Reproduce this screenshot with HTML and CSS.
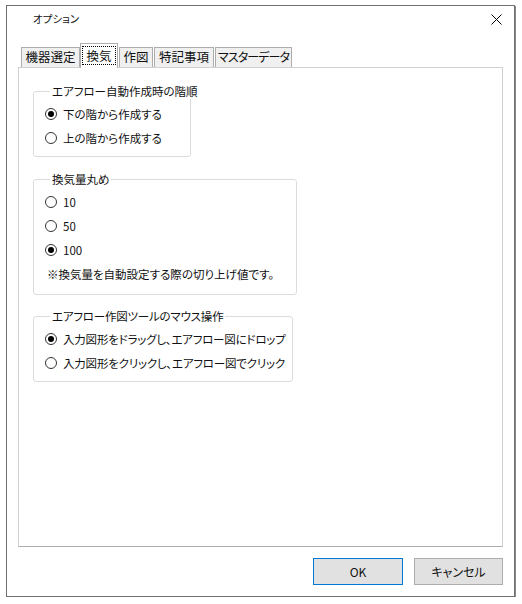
FILE: index.html
```html
<!DOCTYPE html>
<html lang="ja">
<head>
<meta charset="utf-8">
<title>オプション</title>
<link rel="stylesheet" href="styles.css">
</head>
<body>
<div class="window">
  <div class="titlebar">
    <span class="title">オプション</span>
    <svg class="close" width="11" height="11" viewBox="0 0 11 11"><path d="M0.5 0.5L10.5 10.5M10.5 0.5L0.5 10.5" stroke="#000" stroke-width="1" fill="none"/></svg>
  </div>
  <div class="content">
    <div class="tabs">
      <div class="tab t1">機器選定</div>
      <div class="tab t2 selected"><span class="focus">換気</span></div>
      <div class="tab t3">作図</div>
      <div class="tab t4">特記事項</div>
      <div class="tab t5">マスターデータ</div>
    </div>
    <div class="panel">
      <fieldset class="group g1">
        <legend>エアフロー自動作成時の階順</legend>
        <div class="row"><span class="radio checked"></span>下の階から作成する</div>
        <div class="row"><span class="radio"></span>上の階から作成する</div>
      </fieldset>
      <fieldset class="group g2">
        <legend>換気量丸め</legend>
        <div class="row"><span class="radio"></span>10</div>
        <div class="row"><span class="radio"></span>50</div>
        <div class="row"><span class="radio checked"></span>100</div>
        <div class="row note">※換気量を自動設定する際の切り上げ値です。</div>
      </fieldset>
      <fieldset class="group g3">
        <legend>エアフロー作図ツールのマウス操作</legend>
        <div class="row"><span class="radio checked"></span>入力図形をドラッグし、エアフロー図にドロップ</div>
        <div class="row"><span class="radio"></span>入力図形をクリックし、エアフロー図でクリック</div>
      </fieldset>
    </div>
    <div class="buttons">
      <div class="btn ok">OK</div>
      <div class="btn cancel">キャンセル</div>
    </div>
  </div>
</div>
</body>
</html>
```
FILE: styles.css
```css
* { box-sizing: border-box; }
html, body { margin: 0; padding: 0; background: #fff; }
body {
  font-family: "Noto Sans CJK JP", "Noto Sans", sans-serif;
  font-size: 11.5px;
  color: #111;
  font-feature-settings: "palt";
}
.window {
  margin: 5px 0 0 6px;
  width: 509px;
  height: 592px;
  border: 1px solid #6f6f6f;
  box-shadow: 1px 1px 0 #8a8a8a;
  display: flex;
  flex-direction: column;
  background: #fff;
}
.titlebar {
  height: 26px;
  display: flex;
  align-items: center;
  justify-content: space-between;
  padding: 0 12px 0 26px;
}
.title { font-size: 10.5px; line-height: 14px; }
.close { display: block; }
.content {
  padding: 11px 11px 0 11px;
  display: flex;
  flex-direction: column;
}
.tabs {
  display: flex;
  align-items: flex-end;
  height: 24px;
  padding-left: 3px;
  position: relative;
  z-index: 1;
}
.tab {
  height: 20px;
  border: 1px solid #adadad;
  border-bottom: none;
  background: #f0f0f0;
  font-size: 12.5px;
  line-height: 18px;
  text-align: center;
  margin-right: 1px;
  white-space: nowrap;
}
.t1 { width: 59px; }
.t2 { width: 38px; }
.t3 { width: 34px; }
.t4 { width: 60px; }
.t5 { padding: 0 2px; font-size: 12px; letter-spacing: -0.9px; }
.tab.selected {
  height: 25px;
  margin-bottom: -1px;
  background: #fff;
  padding: 2px 1px 0;
  margin-left: -1px;
}
.focus {
  display: block;
  border: 1px dotted #000;
  height: 19px;
  line-height: 17px;
}
.panel {
  height: 480px;
  border: 1px solid #d0d0d0;
  border-bottom-color: #adadad;
  background: #fff;
  padding: 15px 0 0 14px;
  display: flex;
  flex-direction: column;
  align-items: flex-start;
  gap: 14px;
}
.group {
  margin: 0;
  border: 1px solid #dcdcdc;
  border-radius: 3px;
  padding: 3px 0 6px 11px;
  min-width: 0;
}
.g1 { width: 158px; }
.g2 { width: 264px; padding-bottom: 8px; }
.g3 { width: 260px; margin-top: -1px; letter-spacing: -0.2px; }
legend {
  margin-left: 5px;
  padding: 0 2px;
  line-height: 16px;
  white-space: nowrap;
}
.row {
  height: 24px;
  display: flex;
  align-items: center;
  white-space: nowrap;
  line-height: 16px;
}
.row.note { padding-left: 2px; }
.radio {
  width: 12px;
  height: 12px;
  border: 1px solid #333;
  border-radius: 50%;
  margin-right: 6px;
  display: flex;
  align-items: center;
  justify-content: center;
  flex: none;
}
.radio.checked::after {
  content: "";
  width: 6px;
  height: 6px;
  border-radius: 50%;
  background: #000;
}
.buttons {
  margin-top: 11px;
  display: flex;
  justify-content: flex-end;
  gap: 11px;
}
.btn {
  width: 90px;
  height: 27px;
  background: #e1e1e1;
  border: 1px solid #adadad;
  display: flex;
  align-items: center;
  justify-content: center;
  font-size: 12px;
}
.btn.ok { border-color: #0078d7; }
.btn.cancel { width: 89px; }
```
